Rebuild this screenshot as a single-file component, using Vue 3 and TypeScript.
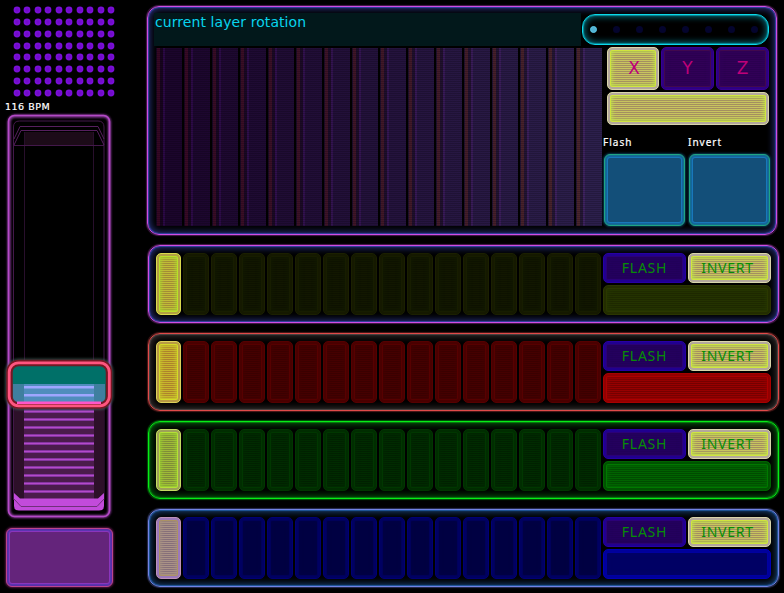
<script setup lang="ts">
interface Layer { name: string; active: boolean }
const layers: Layer[] = ['violet', 'red', 'green', 'blue'].map((name) => ({ name, active: true }))
const columns = Array.from({ length: 16 }, (_, i) => i)
const ticks = Array.from({ length: 14 }, (_, i) => 387 + i * 8)
const dots: { x: number; y: number }[] = []
const xs = [17, 27, 38, 48, 59, 69, 80, 90, 101, 111]
const ys = [10, 22, 34, 46, 57, 69, 81, 93]
ys.forEach((y) => xs.forEach((x) => dots.push({ x, y })))
</script>

<template>
  <div class="deck">
    <aside class="side">
      <svg class="matrix" width="120" height="100" viewBox="0 0 120 100">
        <g v-for="(d, i) in dots" :key="i">
          <circle :cx="d.x" :cy="d.y" r="3.4" fill="#7a0fd8" />
          <circle :cx="d.x" :cy="d.y" r="1.7" fill="#700cc8" />
        </g>
      </svg>
      <div class="bpm">116 BPM</div>
      <svg class="fader" width="120" height="412" viewBox="0 110 120 412">
        <defs>
          <filter id="glow" x="-20%" y="-20%" width="140%" height="140%"><feGaussianBlur stdDeviation="1.3" /></filter>
        </defs>
        <rect x="9" y="116" width="100.500" height="400.500" rx="6" fill="none" stroke="#8c3a9e" stroke-width="3" filter="url(#glow)" />
        <rect x="8.500" y="115.500" width="101" height="401" rx="6" fill="none" stroke="#b44ac6" stroke-width="1.600" />
        <g fill="none" stroke="#43184a" stroke-width="1">
          <path d="M13.500 500V127q0-6 6-6H98q6 0 6 6V500" />
          <path d="M14 139L20 126.500H98L104 139" stroke="#561f5e" />
          <path d="M14 145L21 130.500H97L104 145" stroke="#561f5e" />
          <rect x="24" y="132" width="70" height="13" fill="#1c0b18" stroke="none" />
          <path d="M24.500 132V500M93.500 132V500" stroke="#280f2c" />
          <path d="M14 145.500H104" />
        </g>
        <rect x="14" y="384" width="90" height="117" fill="#2d1029" />
        <rect x="24" y="384" width="70" height="117" fill="#4b1c4c" />
        <g v-for="y in ticks" :key="y">
          <rect x="24" :y="y - 1" width="70" height="3" fill="#8535a0" />
          <rect x="24" :y="y" width="70" height="1" fill="#b54aca" />
        </g>
        <path d="M14 493L20 498.500H98L104 493V506q0 4.500-5 4.500H19q-5 0-5-4.500Z" fill="#c24bdb" />
        <path d="M14 499L21 506.500H97L104 499" fill="none" stroke="#71307c" />
        <rect x="8" y="361.500" width="102.500" height="45.500" rx="11" fill="none" stroke="#4a6b66" stroke-width="6" opacity=".6" filter="url(#glow)" />
        <rect x="10" y="364" width="98" height="41" rx="9" fill="#007068" />
        <path d="M13 384H105V398q0 5-6 5H19q-6 0-6-5Z" fill="#3f7f9f" />
        <rect x="24" y="384" width="70" height="18" fill="#508dbd" />
        <g fill="#9fa6ff">
          <rect x="24" y="386" width="70" height="2.500" />
          <rect x="24" y="394" width="70" height="2.500" />
        </g>
        <rect x="9.500" y="363" width="99.500" height="42.500" rx="9" fill="none" stroke="#741824" stroke-width="6.500" />
        <path d="M17 402.700H101" stroke="#ff55c8" stroke-width="2.500" />
        <rect x="9.200" y="362.800" width="100.100" height="43" rx="9.500" fill="none" stroke="#ff5580" stroke-width="2.800" />
      </svg>
      <div class="tap"></div>
    </aside>

    <main class="main">
      <section class="panel rotation">
        <div class="view">
          <header class="title">current layer rotation</header>
          <div class="bars">
            <i v-for="i in columns" :key="i" :style="{ '--k': i / 15 }"></i>
          </div>
        </div>
        <div class="tools">
          <div class="pager"><b v-for="n in 8" :key="n" :class="{ on: n === 1 }"></b></div>
          <div class="axes">
            <button class="pad lit">X</button>
            <button class="pad dim">Y</button>
            <button class="pad dim">Z</button>
          </div>
          <div class="pad lit wide"></div>
          <div class="labels"><span>Flash</span><span>Invert</span></div>
          <div class="squares"><div></div><div></div></div>
        </div>
      </section>

      <section v-for="l in layers" :key="l.name" class="panel row" :class="l.name">
        <div class="steps">
          <div v-for="i in columns" :key="i" class="pad step" :class="{ first: i === 0 }"></div>
        </div>
        <div class="actions">
          <button class="pad flash">FLASH</button>
          <button class="pad lit invert">INVERT</button>
          <div class="pad level"></div>
        </div>
      </section>
    </main>
  </div>
</template>

<style>
html, body { background: #000; overflow: hidden; }
</style>

<style scoped>
.deck { display: flex; width: 784px; height: 593px; background: #000; font-family: "Noto Sans", sans-serif; box-sizing: border-box; }
.deck * { box-sizing: border-box; }
.side { width: 147px; flex: none; display: flex; flex-direction: column; }
.matrix, .fader { display: block; flex: none; }
.bpm { height: 10px; padding-left: 5px; font: 9.5px/13px "DejaVu Sans", sans-serif; letter-spacing: .5px; color: #fff; -webkit-text-stroke: .2px #fff; white-space: nowrap; }
.tap { width: 107px; height: 59px; margin: 6px 0 0 6px; border-radius: 6px; border: 1px solid #bb438c; background: #64247b;
  box-shadow: 0 0 2px 1px #501540, inset 0 0 0 1px #5b2da8, inset 0 0 0 2px #5b36b0, inset 0 0 0 3px #8a35bc; }
.main { width: 632px; padding-top: 6px; display: flex; flex-direction: column; gap: 10px; }
.panel { --line: #d04de4; --glow: #3542a4; flex: none; display: flex; border: 1px solid var(--line); border-radius: 12px;
  box-shadow: 0 0 1px 1px color-mix(in srgb, var(--line) 35%, #000), inset 0 0 1px 1px var(--glow), inset 0 0 7px 2px color-mix(in srgb, var(--glow) 75%, #000); }
.rotation { width: 630px; height: 229px; padding: 6px 0 0 6px; }
.view { width: 448px; }
.title { width: 427px; height: 33px; padding-left: 1px; background: #02181b; color: #08d4ee; font: 14px/18px "DejaVu Sans", sans-serif; letter-spacing: .08px; white-space: nowrap; }
.bars { display: flex; gap: 2px; padding: 2px 0 0 2px; }
.bars i { width: 26px; height: 178px; flex: none;
  --base: color-mix(in srgb, #2c1f4c calc(var(--k) * 100%), #1b052c);
  --red: color-mix(in srgb, #4a252d calc(var(--k) * 100%), #360825);
  --vio: color-mix(in srgb, #3e2260 calc(var(--k) * 100%), #2b0846);
  --shade: color-mix(in srgb, #251736 calc(var(--k) * 100%), #17041f);
  background: repeating-linear-gradient(#0000 0 1px, #00000030 1px 2px),
    linear-gradient(90deg, var(--shade) 0 1px, var(--red) 1px 4px, var(--shade) 4px 7px, var(--vio) 7px 9px, var(--base) 9px); }
.tools { width: 168px; display: flex; flex-direction: column; margin-left: 1px; }
.pager { width: 187px; height: 31px; margin: 1px 0 0 -21px; border: 1px solid #0bd9eb; border-radius: 13px; background: #000;
  box-shadow: inset 0 0 1px 1px #078b99, inset 0 0 6px 2px #056673; display: flex; align-items: center; gap: 16px; padding-left: 7px; }
.pager b { width: 7px; height: 7px; border-radius: 50%; background: #04042d; }
.pager b.on { background: #53b2d3; border: 1px solid #5bc9e8; }
.axes { display: grid; grid-template-columns: 52px 53px 53px; gap: 2px; margin: 2px 0 0 4px; height: 43px; }
.pad { appearance: none; display: flex; align-items: center; justify-content: center; border: 1px solid var(--out, var(--rim)); border-radius: 5px; padding: 0; margin: 0;
  outline: 0; color: inherit; background: repeating-linear-gradient(var(--a) 0 1px, var(--b) 1px 2px) padding-box;
  box-shadow: inset 0 0 0 2px var(--rim), inset 0 0 0 3px var(--edge), inset 0 0 4px 4px var(--halo); }
.lit { --out: #d9d5ac; --rim: #b3a79d; --a: #c8c45f; --b: #a48f60; --edge: #d0e53e; --halo: #bde04a; }
.dim { --out: #380092; --rim: #2e0082; --a: #310057; --b: #2b0050; --edge: #42084c; --halo: #300058; }
.axes .pad { font: 17px/20px "DejaVu Sans", sans-serif; color: #be0079; padding: 0 0 1px 2px; }
.axes .dim { padding-left: 0; }
.wide { width: 162px; height: 33px; margin: 2px 0 0 4px; }
.labels { display: grid; grid-template-columns: 85px 83px; height: 29px; padding-top: 10px; color: #fff; font: 10px/14px "Noto Sans", sans-serif; letter-spacing: 1px; -webkit-text-stroke: .2px #fff; }
.squares { display: flex; gap: 4px; padding-left: 1px; }
.squares div { width: 81px; height: 72px; border: 1px solid #21a583; border-radius: 6px; background: #134f79;
  box-shadow: 0 0 2px 1px #073851, inset 0 0 0 1px #126f91, inset 0 0 0 2px #15659c, inset 0 0 0 3px #1878ba; }
.row { width: 631px; height: 78px; margin-left: 1px; padding: 7px 0 0 6px; }
.steps { display: grid; grid-template-columns: repeat(16, 26px); gap: 2px; width: 448px; height: 62px; }
.step { --out: #1b2000; --rim: #151900; --a: #121700; --b: #0e1200; --edge: #171d00; --halo: #121900; }
.actions { display: grid; grid-template-columns: 83px 83px; grid-template-rows: 30px 30px; gap: 2px; }
.actions .pad { font: 14px/18px "Noto Sans", sans-serif; letter-spacing: .75px; color: #078d06; }
.actions .invert { padding-right: 4px; }
.level { grid-column: 1 / 3; --out: #2b3600; --rim: #232d00; --a: #243300; --b: #1e2900; --edge: #2a3800; --halo: #263600; }
.flash { --out: #2700a4; --rim: #200090; --a: #24005e; --b: #220059; --edge: #2b0078; --halo: #24005e; }
.first { margin-left: 1px; --out: #d9d94c; --rim: #b3a043; --a: #c1bb38; --b: #a28c36; --edge: #b9e028; --halo: #aad52e; }
.red { --line: #e14a49; --glow: #4c4544; }
.green { --line: #05ed16; --glow: #087f10; }
.blue { --line: #7182e4; --glow: #21589c; }
.red .step:not(.first) { --out: #560000; --rim: #4a0000; --a: #450000; --b: #3a0000; --edge: #570000; --halo: #430000; }
.red .level { --out: #a80000; --rim: #930000; --a: #970000; --b: #740000; --edge: #ac0000; --halo: #900000; }
.red .first { --out: #dcd05a; --rim: #b89a43; --a: #c7b52d; --b: #ad822c; --edge: #d3da28; --halo: #c7c82b; }
.green .step:not(.first) { --out: #003600; --rim: #002d00; --a: #002b00; --b: #002100; --edge: #003700; --halo: #002900; }
.green .level { --out: #006300; --rim: #005200; --a: #006300; --b: #004b00; --edge: #007800; --halo: #006600; }
.green .first { --out: #c3dc60; --rim: #9ea158; --a: #9fba38; --b: #7f8d38; --edge: #b4e037; --halo: #99d02f; }
.blue .step:not(.first) { --out: #000074; --rim: #000062; --a: #000042; --b: #000042; --edge: #00005a; --halo: #000045; }
.blue .level { --out: #0000b4; --rim: #00009c; --a: #000064; --b: #000064; --edge: #0000a0; --halo: #000068; }
.blue .first { --out: #bd92ba; --rim: #9b78ba; --a: #aa9287; --b: #866f79; --edge: #ab9263; --halo: #a58f80; }
</style>
